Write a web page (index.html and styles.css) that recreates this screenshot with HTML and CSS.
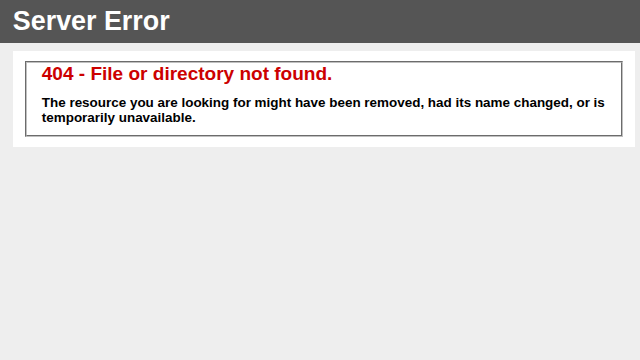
FILE: index.html
```
<!DOCTYPE html>
<html>
<head>
<meta charset="utf-8">
<title>404 - File or directory not found.</title>
<link rel="stylesheet" href="styles.css">
</head>
<body>
<div class="header"><h1>Server Error</h1></div>
<div class="content">
 <div class="content-container"><fieldset>
  <h2>404 - File or directory not found.</h2>
  <h3>The resource you are looking for might have been removed, had its name changed, or is temporarily unavailable.</h3>
 </fieldset></div>
</div>
</body>
</html>
```
FILE: styles.css
```
body{margin:0;font-size:.7em;font-family:"Liberation Sans",Arial,sans-serif;background:#EEEEEE;}
fieldset{padding:0 15px 10px 15px;margin:0 2px;border:2px groove rgb(192,192,192);}
h1{font-size:2.4em;margin:0;color:#FFF;}
h2{font-size:1.7em;margin:0;color:#CC0000;}
h3{font-size:1.2em;margin:10px 0 0 0;color:#000000;}
.header{width:96%;margin:0;padding:6px 2%;font-family:"Liberation Sans",Arial,sans-serif;color:#FFF;background-color:#555555;}
.content{margin:0 0 0 2%;position:relative;}
.content-container{background:#FFF;width:96%;margin-top:8px;padding:10px;position:relative;}
```
